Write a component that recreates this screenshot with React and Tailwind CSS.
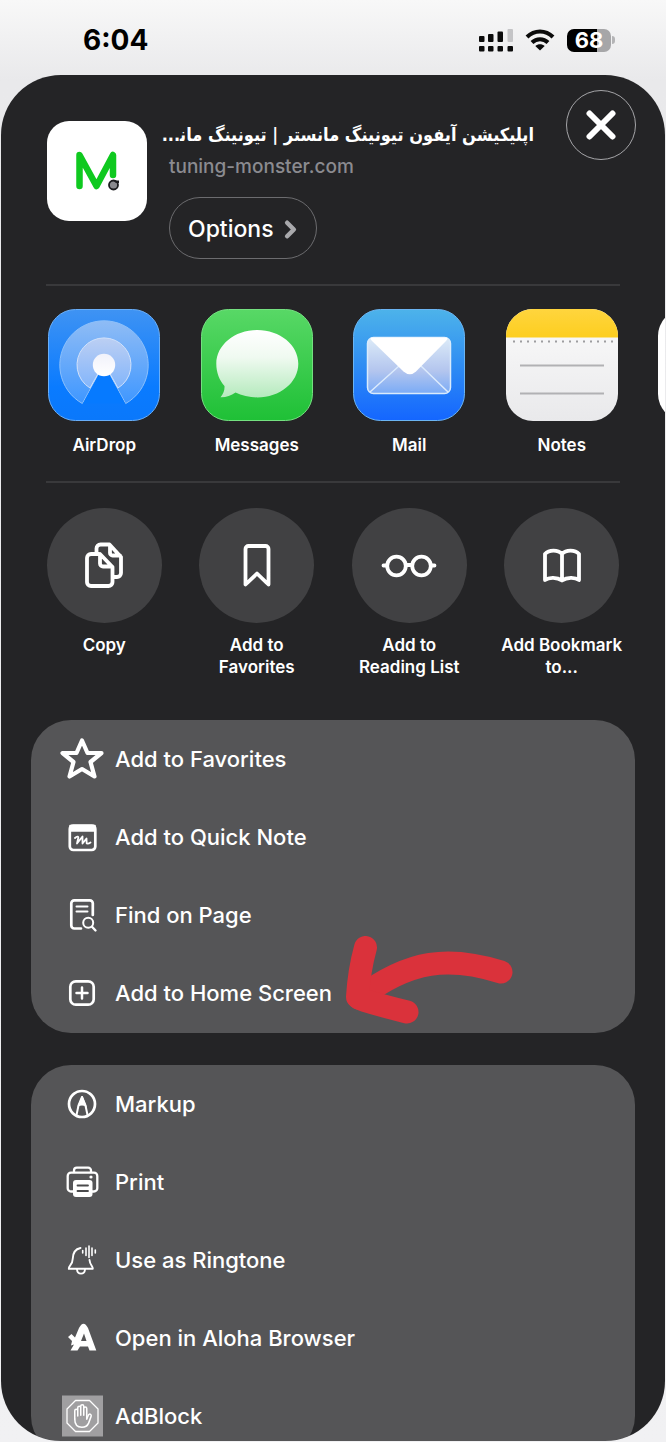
import { ChevronRight } from "lucide-react";
import { IoHandLeftOutline } from "react-icons/io5";

const StatusBar = () => (
  <header className="h-[75px] shrink-0 flex items-center justify-between pl-[83px] pr-[51px] pb-px pt-[6px] text-black">
    <time className="text-[28px] leading-8 font-bold">6:04</time>

    <div className="flex items-center gap-[12px]">
      <svg width="34" height="24" viewBox="0 0 34 24" aria-label="Signal">
        <g fill="#0b0b0b">
          <rect x="0" y="8" width="5.500" height="6" rx="1" />
          <rect x="9" y="6" width="5.500" height="8" rx="1" />
          <rect x="18.500" y="3.500" width="5.500" height="10.500" rx="1" />
          <rect x="0" y="18" width="5.500" height="5.500" rx="1" />
          <rect x="9" y="18" width="5.500" height="5.500" rx="1" />
          <rect x="18.500" y="18" width="5.500" height="5.500" rx="1" />
          <rect x="28.500" y="18" width="5.500" height="5.500" rx="1" />
        </g>
        <rect x="28.500" y="1" width="5.500" height="13" rx="1" fill="#c4c4c6" />
      </svg>

      <svg width="30" height="24" viewBox="0 0 30 24" aria-label="Wi-Fi">
        <g fill="none" stroke="#0b0b0b" strokeWidth="4">
          <path d="M2 9C9.500 1.500 20.500 1.500 28 9" />
          <path d="M7 14.500C11.500 10 18.500 10 23 14.500" />
        </g>
        <path d="M15 22.500 10.300 18C13 15.800 17 15.800 19.700 18Z" fill="#0b0b0b" />
      </svg>

      <div className="flex items-center gap-px">
        <div className="w-[44px] h-[23px] rounded-[7px] bg-linear-to-r from-black from-68% to-[#a6a6a8] to-68% text-white text-[22px] leading-[23px] font-bold text-center">
          68
        </div>
        <div className="w-[3px] h-[8px] rounded-r-full bg-[#b4b4b6]" />
      </div>
    </div>
  </header>
);

const SiteLogo = () => (
  <div className="size-[100px] shrink-0 mt-[31px] rounded-[22px] bg-white">
    <svg viewBox="0 0 100 100" aria-label="Tuning Monster">
      <path
        d="M32.500 65V34L49.500 65 66 34V54"
        fill="none"
        stroke="#0fc91f"
        strokeWidth="6.500"
        strokeLinecap="round"
        strokeLinejoin="round"
      />
      <circle cx="66.500" cy="64" r="4.500" fill="#8a8a8e" stroke="#1d1d1f" strokeWidth="1.800" />
      <path d="M66 59.500H72V62H69" fill="#1d1d1f" />
    </svg>
  </div>
);

const AirDropIcon = () => (
  <svg viewBox="0 0 112 112">
    <defs>
      <linearGradient id="airBg" x1="0" y1="0" x2="0" y2="1">
        <stop offset="0" stopColor="#3f93f3" />
        <stop offset="0.700" stopColor="#0a7bff" />
        <stop offset="1" stopColor="#0a78fb" />
      </linearGradient>
      <linearGradient id="airRing" x1="0" y1="0" x2="0" y2="1">
        <stop offset="0" stopColor="#8fbcf5" />
        <stop offset="1" stopColor="#3f97ff" />
      </linearGradient>
      <linearGradient id="airMid" x1="0" y1="0" x2="0" y2="1">
        <stop offset="0" stopColor="#bccff3" />
        <stop offset="1" stopColor="#82b5fb" />
      </linearGradient>
      <linearGradient id="airDot" x1="0" y1="0" x2="0" y2="1">
        <stop offset="0" stopColor="#f1f2fb" />
        <stop offset="1" stopColor="#fff" />
      </linearGradient>
    </defs>
    <rect x="0.500" y="0.500" width="111" height="111" rx="27" fill="url(#airBg)" stroke="#69aef8" />
    <path d="M34.300 94.500A44.200 44.200 0 1 1 77.700 94.500L56 55Z" fill="url(#airRing)" stroke="#8cc0fb" />
    <path d="M42 79A27 27 0 1 1 70 79L56 54Z" fill="url(#airMid)" stroke="#d2e2fb" />
    <path d="M56 56 77 94.500H35Z" fill="#067aff" />
    <circle cx="56" cy="56" r="11.200" fill="url(#airDot)" />
  </svg>
);

const MessagesIcon = () => (
  <svg viewBox="0 0 112 112">
    <defs>
      <linearGradient id="msgBg" x1="0" y1="0" x2="0" y2="1">
        <stop offset="0" stopColor="#58d866" />
        <stop offset="1" stopColor="#1fc036" />
      </linearGradient>
      <linearGradient id="msgBubble" x1="0" y1="0" x2="0" y2="1">
        <stop offset="0" stopColor="#fff" />
        <stop offset="0.400" stopColor="#f0faf1" />
        <stop offset="1" stopColor="#b5eabd" />
      </linearGradient>
    </defs>
    <rect x="0.500" y="0.500" width="111" height="111" rx="27" fill="url(#msgBg)" stroke="#74e080" />
    <path
      d="M56.300 21C79 21 97.300 36 97.300 54.700S79 88.400 56.300 88.400C48.500 88.400 40.500 86.500 34.500 83.500 30 86.500 25 88.500 19.500 88.300 22.500 85 23.800 81 23.500 77 18.300 71 15.300 63.500 15.300 54.700 15.300 36 33.600 21 56.300 21Z"
      fill="url(#msgBubble)"
    />
  </svg>
);

const MailIcon = () => (
  <svg viewBox="0 0 112 112">
    <defs>
      <linearGradient id="mailBg" x1="0" y1="0" x2="0" y2="1">
        <stop offset="0" stopColor="#4db3ea" />
        <stop offset="0.500" stopColor="#2f8df3" />
        <stop offset="1" stopColor="#1466ff" />
      </linearGradient>
      <linearGradient id="mailBody" x1="0" y1="0" x2="0" y2="1">
        <stop offset="0" stopColor="#dcebf8" />
        <stop offset="0.600" stopColor="#b3c5ee" />
        <stop offset="1" stopColor="#7aabf6" />
      </linearGradient>
    </defs>
    <rect x="0.500" y="0.500" width="111" height="111" rx="27" fill="url(#mailBg)" stroke="#6bb4f2" />
    <rect x="14.500" y="28.500" width="83" height="56" rx="6" fill="url(#mailBody)" stroke="#d9ebfc" strokeWidth="1.500" />
    <path d="M17 83 46 57M95 83 68 57" stroke="#dcebfd" strokeWidth="1.500" />
    <path d="M19 28.500H93Q96 28.500 93 32L63 62.500Q57 68 50.500 62.500L19 32Q16 28.500 19 28.500Z" fill="#fff" />
  </svg>
);

const NotesIcon = () => (
  <svg viewBox="0 0 112 112">
    <defs>
      <clipPath id="notesClip">
        <rect width="112" height="112" rx="27" />
      </clipPath>
      <linearGradient id="notesPaper" x1="0" y1="0" x2="0" y2="1">
        <stop offset="0" stopColor="#fbfbfb" />
        <stop offset="1" stopColor="#e9e9eb" />
      </linearGradient>
      <linearGradient id="notesTop" x1="0" y1="0" x2="0" y2="1">
        <stop offset="0" stopColor="#ffd53e" />
        <stop offset="1" stopColor="#fdce1f" />
      </linearGradient>
    </defs>
    <g clipPath="url(#notesClip)">
      <rect width="112" height="112" fill="url(#notesPaper)" />
      <rect width="112" height="28.500" fill="url(#notesTop)" />
      <path d="M7 32.500H108" stroke="#9d9da0" strokeWidth="2" strokeDasharray="2 5" />
      <path d="M14 56.500H98M14 84.500H98" stroke="#b1b1b4" strokeWidth="2" />
    </g>
  </svg>
);

const CopyIcon = () => (
  <>
    <path d="M23 16H15a4 4 0 0 0-4 4V44a4 4 0 0 0 4 4H32.500a4 4 0 0 0 4-4V29L24 16V25.500a3 3 0 0 0 3 3H36" />
    <path d="M20.500 15V10.500a4 4 0 0 1 4-4H33.500L45 19V35a4 4 0 0 1-4 4H38M34 7.500V15a2.500 2.500 0 0 0 2.500 2.500H44" />
  </>
);

const BookmarkIcon = () => (
  <path d="M16.500 46.500V11a3 3 0 0 1 3-3H36.500a3 3 0 0 1 3 3V46.500L28 35.500Z" />
);

const GlassesIcon = () => (
  <>
    <circle cx="15.500" cy="28" r="9.300" />
    <circle cx="40.500" cy="28" r="9.300" />
    <path d="M2.500 27.500H6M50 27.500H53.500M25 27H31" />
  </>
);

const BookIcon = () => (
  <path d="M28 16C24 11.500 15 11.500 11 16V42C15 39 23 39 28 42.500 33 39 41 39 45 42V16C41 11.500 32 11.500 28 16V42" />
);

const StarIcon = () => (
  <path
    d="M22 3.500 27.500 16H41.500L30.500 25 34.500 39.500 22 32 9.500 39.500 13.500 25 2.500 16H16.500Z"
    strokeWidth="4.200"
  />
);

const QuickNoteIcon = () => (
  <>
    <rect x="9.800" y="10.500" width="25.500" height="24.500" rx="3.500" />
    <path d="M10 10.500H35V16H10Z" fill="#fff" strokeWidth="1.500" />
    <path
      d="M15 23C17.500 20.500 19 21.500 18 24L17 28.500 22.500 21.500 22.500 28.500 26.500 23.500 26.700 28.500Q28.500 29 30.500 27.500"
      strokeWidth="1.800"
    />
  </>
);

const FindIcon = () => (
  <>
    <path d="M21 35.500H14.300a3 3 0 0 1-3-3V10.300a3 3 0 0 1 3-3H29.800a3 3 0 0 1 3 3V22" />
    <path d="M16.500 13.500H27.500M16.500 18.500H27.500" strokeWidth="2" />
    <circle cx="28.200" cy="29.800" r="5" strokeWidth="2" />
    <path d="M32 33.800 35.500 37.500" strokeWidth="2.400" />
  </>
);

const AddHomeIcon = () => (
  <>
    <rect x="10.300" y="10.300" width="23.400" height="23.400" rx="5.500" />
    <path d="M22 16.500V27.500M16.500 22H27.500" strokeWidth="2.500" />
  </>
);

const MarkupIcon = () => (
  <>
    <circle cx="22" cy="22" r="13" />
    <path d="M16.500 33 18.500 23.500 22 15 25.500 23.500 27.500 33" strokeWidth="2" />
    <path d="M22 14.500 18 24.500C20 22.500 24 22.500 26 24.500Z" fill="#fff" strokeWidth="1" />
  </>
);

const PrintIcon = () => (
  <>
    <path d="M14 12V10.500a2.800 2.800 0 0 1 2.800-2.800H28.200a2.800 2.800 0 0 1 2.800 2.800V12" strokeWidth="2.300" />
    <path
      d="M13 31.500H11a3.300 3.300 0 0 1-3.300-3.300V16a3.300 3.300 0 0 1 3.300-3.300H34a3.300 3.300 0 0 1 3.300 3.300V28.200a3.300 3.300 0 0 1-3.300 3.300H32"
      strokeWidth="2.300"
    />
    <rect x="13" y="20" width="19.500" height="17" rx="3" fill="#fff" stroke="none" />
    <path d="M17.500 25.500H28M17.500 31H28" stroke="#4a4a4c" strokeWidth="1.800" />
    <circle cx="31" cy="17" r="1.600" fill="#fff" stroke="none" />
  </>
);

const RingtoneIcon = () => (
  <g strokeWidth="1.900">
    <path d="M20.500 10C15.500 11 12.800 15.500 12.700 21 12.600 27 8.500 27.500 8.800 30.800H32.800C33 28 30 27.500 29.500 22" />
    <path d="M17 31.500C17.500 37 24.500 37 25 31.500" />
    <path d="M22.700 12.500V15M26 10V17.500M29 8V19.500M32 10V17.500M35.300 12V15" strokeWidth="1.600" />
  </g>
);

const AlohaIcon = () => (
  <path
    d="M10.500 34.500 14 28.500 11 29.500 12 25 8 21 11.500 18 15 21.500 19 12Q23.500 3.500 28 12L36.300 34.500H29.500L28 30.500H20L17.500 34.500ZM21 25H26.500L24 17.500Z"
    fill="#fff"
    fillRule="evenodd"
    stroke="none"
  />
);

const AdBlockIcon = () => (
  <>
    <rect x="2" y="1.500" width="41" height="41" fill="#a09fa1" stroke="none" />
    <path d="M15.500 6.500H29.500L38 15V29L29.500 37.500H15.500L7 29V15Z" strokeWidth="1.300" />
    <IoHandLeftOutline x="11" y="10" size={24} />
  </>
);

const apps = [
  { label: "AirDrop", Icon: AirDropIcon },
  { label: "Messages", Icon: MessagesIcon },
  { label: "Mail", Icon: MailIcon },
  { label: "Notes", Icon: NotesIcon },
];

const shortcuts = [
  { label: "Copy", Icon: CopyIcon },
  { label: "Add to\nFavorites", Icon: BookmarkIcon },
  { label: "Add to\nReading List", Icon: GlassesIcon },
  { label: "Add Bookmark\nto...", Icon: BookIcon },
];

const pageActions = [
  { label: "Add to Favorites", Icon: StarIcon },
  { label: "Add to Quick Note", Icon: QuickNoteIcon },
  { label: "Find on Page", Icon: FindIcon },
  { label: "Add to Home Screen", Icon: AddHomeIcon },
];

const moreActions = [
  { label: "Markup", Icon: MarkupIcon },
  { label: "Print", Icon: PrintIcon },
  { label: "Use as Ringtone", Icon: RingtoneIcon },
  { label: "Open in Aloha Browser", Icon: AlohaIcon },
  { label: "AdBlock", Icon: AdBlockIcon },
];

const Divider = () => <hr className="mx-[45px] h-[2px] border-0 bg-[#39393b]" />;

const ActionList = ({ items, children }) => (
  <div className="relative mx-[30px] pb-px rounded-[40px] bg-[#555557]">
    <ul>
      {items.map(({ label, Icon }) => (
        <li key={label}>
          <button className="w-full h-[78px] pl-[29px] flex items-center gap-[11px] text-[22px] leading-7 font-medium text-left">
            <svg
              width="44"
              height="44"
              viewBox="0 0 44 44"
              fill="none"
              stroke="#fff"
              strokeWidth="2.700"
              strokeLinecap="round"
              strokeLinejoin="round"
            >
              <Icon />
            </svg>
            {label}
          </button>
        </li>
      ))}
    </ul>
    {children}
  </div>
);

const App = () => {
  return (
    <div
      className="h-screen flex flex-col bg-linear-to-b from-[#f8f8f8] via-[#e9e9eb] via-[80px] to-[#f1f1f3] text-white"
      style={{ fontFamily: 'Inter, "DejaVu Sans", sans-serif' }}
    >
      <StatusBar />

      <main className="flex-1 min-h-0 mx-px mb-px rounded-[60px] bg-[#242426] overflow-y-auto overflow-x-hidden [scrollbar-width:none]">
        <section className="flex items-start pl-[46px] pr-[29px] pt-[15px]">
          <SiteLogo />
          <div className="flex-1 min-w-0 ml-[22px] mr-8 mt-[29px]">
            <h1
              dir="rtl"
              className="text-[18px] leading-8 font-bold whitespace-nowrap font-['DejaVu_Sans_Condensed','DejaVu_Sans',sans-serif]"
            >
              اپلیکیشن آیفون تیونینگ مانستر | تیونینگ مان&zwj;...
            </h1>
            <p className="text-[19px] leading-8 font-medium text-[#8b8b90]">
              tuning-monster.com
            </p>
            <button className="mt-[14px] h-[62px] pt-[2px] pl-[18px] pr-[12px] flex items-center gap-[3px] rounded-full border border-[#6c6c6f] text-[23px] font-medium">
              Options
              <ChevronRight size={27} strokeWidth={4} className="text-[#a9a9ac]" />
            </button>
          </div>
          <button
            aria-label="Close"
            className="size-[70px] shrink-0 flex items-center justify-center rounded-full border border-[#a5a5a8]"
          >
            <svg width="30" height="30" viewBox="0 0 30 30">
              <path d="M3.500 3.500 26.500 26.500M26.500 3.500 3.500 26.500" stroke="#fff" strokeWidth="6" strokeLinecap="round" />
            </svg>
          </button>
        </section>

        <div className="h-[25px]" />
        <Divider />

        <section className="grid grid-flow-col auto-cols-[25%] px-[27px] pt-[23px] pb-[25px] overflow-x-auto [scrollbar-width:none]">
          {apps.map(({ label, Icon }) => (
            <button key={label} className="flex flex-col items-center">
              <span className="size-[112px]">
                <Icon />
              </span>
              <span className="mt-[13px] text-[17px] leading-[22px] font-semibold">{label}</span>
            </button>
          ))}
          <div className="flex justify-center">
            <div className="size-[112px] rounded-[27px] bg-white" />
          </div>
        </section>

        <Divider />

        <section className="grid grid-cols-4 px-[27px] pt-[25px] pb-[42px]">
          {shortcuts.map(({ label, Icon }) => (
            <button key={label} className="flex flex-col items-center">
              <span className="size-[115px] flex items-center justify-center rounded-full bg-[#414143]">
                <svg
                  width="56"
                  height="56"
                  viewBox="0 0 56 56"
                  fill="none"
                  stroke="#fff"
                  strokeWidth="3.800"
                  strokeLinecap="round"
                  strokeLinejoin="round"
                >
                  <Icon />
                </svg>
              </span>
              <span className="mt-[11px] whitespace-pre text-[17px] leading-[22px] font-semibold">{label}</span>
            </button>
          ))}
        </section>

        <div className="flex flex-col gap-8">
          <ActionList items={pageActions}>
            <svg
              className="absolute left-[314px] top-[216px] pointer-events-none"
              width="170"
              height="90"
              viewBox="0 0 170 90"
              fill="none"
              stroke="#da323b"
              strokeWidth="23"
              strokeLinecap="round"
              strokeLinejoin="round"
            >
              <path d="M156 36C105 20 65 23 14 62" />
              <path d="M20.500 11.500Q14 35 12.500 61 14 64 62 76" />
            </svg>
          </ActionList>
          <ActionList items={moreActions} />
        </div>
      </main>
    </div>
  );
};

export default App;
